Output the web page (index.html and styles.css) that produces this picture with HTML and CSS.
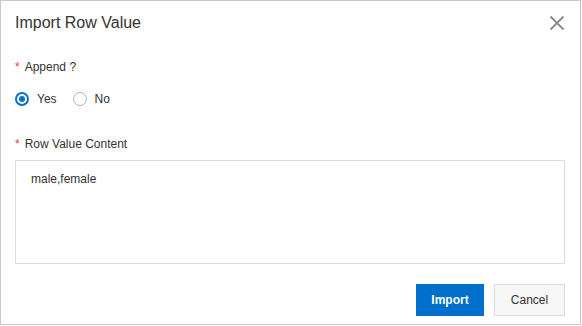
FILE: index.html
```
<!DOCTYPE html>
<html lang="en">
<head>
<meta charset="utf-8">
<title>Import Row Value</title>
<link rel="stylesheet" href="styles.css">
</head>
<body>
<div class="dialog">
  <div class="header">
    <div class="title">Import Row Value</div>
    <span class="close" aria-label="Close">
      <svg width="16" height="16" viewBox="0 0 16 16"><path d="M1.5 1.5 L14.5 14.5 M14.5 1.5 L1.5 14.5" stroke="#8a8a8a" stroke-width="1.8" fill="none"/></svg>
    </span>
  </div>
  <div class="label label-first"><span class="req">*</span>Append ?</div>
  <div class="radios">
    <label class="radio"><span class="dot checked"></span><span class="rtext">Yes</span></label>
    <label class="radio"><span class="dot"></span><span class="rtext">No</span></label>
  </div>
  <div class="label label-second"><span class="req">*</span>Row Value Content</div>
  <div class="textbox">male,female</div>
  <div class="footer">
    <button class="btn primary">Import</button>
    <button class="btn secondary">Cancel</button>
  </div>
</div>
</body>
</html>
```
FILE: styles.css
```
html, body {
  margin: 0;
  padding: 0;
  background: #fff;
}
body {
  font-family: "Liberation Sans", Arial, sans-serif;
  color: #333;
}
.dialog {
  box-sizing: border-box;
  width: 581px;
  height: 325px;
  border: 1px solid #c8c8c8;
  padding: 10px 15px 0 14px;
  display: flex;
  flex-direction: column;
}
.header {
  display: flex;
  align-items: center;
  justify-content: space-between;
  height: 24px;
}
.title {
  font-size: 16px;
  line-height: 24px;
  color: #333;
}
.close {
  display: flex;
  width: 16px;
  height: 16px;
}
.label {
  font-size: 12px;
  line-height: 18px;
  color: #333;
}
.label-first {
  margin-top: 23px;
}
.label-second {
  margin-top: 27px;
}
.req {
  color: #e5413a;
  margin-right: 5px;
}
.radios {
  display: flex;
  align-items: center;
  gap: 16px;
  margin-top: 14px;
  height: 18px;
}
.radio {
  display: flex;
  align-items: center;
  gap: 8px;
  font-size: 12px;
  line-height: 18px;
  color: #333;
}
.dot {
  box-sizing: border-box;
  width: 14px;
  height: 14px;
  border-radius: 50%;
  border: 1px solid #b3b3b3;
  display: flex;
  align-items: center;
  justify-content: center;
  background: #fff;
}
.dot.checked {
  border: 2px solid #0070cc;
}
.dot.checked::after {
  content: "";
  width: 6px;
  height: 6px;
  border-radius: 50%;
  background: #0070cc;
}
.textbox {
  box-sizing: border-box;
  margin-top: 7px;
  height: 104px;
  border: 1px solid #dcdcdc;
  padding: 9px 15px;
  font-size: 12px;
  line-height: 18px;
  color: #333;
}
.footer {
  display: flex;
  justify-content: flex-end;
  gap: 10px;
  margin-top: 20px;
}
.btn {
  box-sizing: border-box;
  height: 32px;
  font-family: "Liberation Sans", Arial, sans-serif;
  font-size: 12px;
  padding: 0;
  border-radius: 0;
  cursor: pointer;
}
.primary {
  background: #0070cc;
  border: 1px solid #0070cc;
  color: #fff;
  font-weight: bold;
  width: 68px;
}
.secondary {
  background: #f7f7f7;
  border: 1px solid #dcdcdc;
  color: #333;
  width: 71px;
}
```
